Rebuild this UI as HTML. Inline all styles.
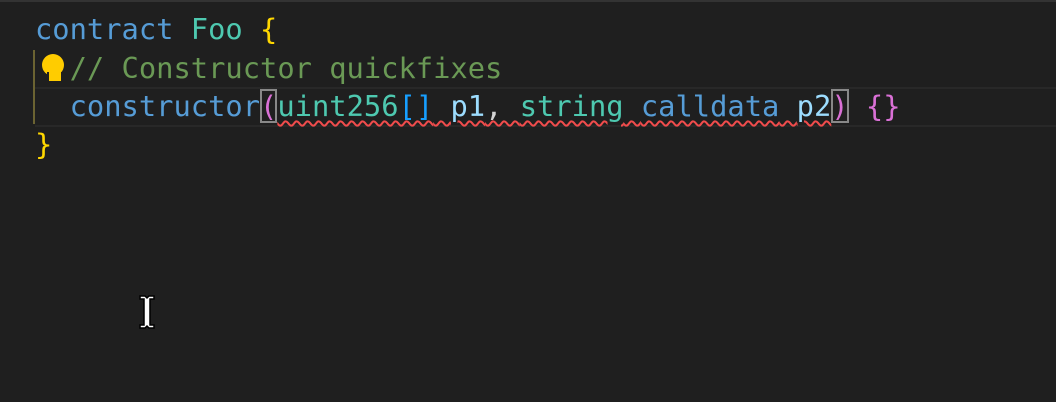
<!DOCTYPE html><html><head><style>
body{margin:0;width:1056px;height:402px;background:#1f1f1f;overflow:hidden;position:relative;font-family:"DejaVu Sans Mono","Liberation Mono",monospace;font-size:28.75px}
.l{position:absolute;left:35px;height:38px;line-height:38px;white-space:pre;color:#d4d4d4}
.k{color:#569cd6}.t{color:#4ec9b0}.y{color:#ffd700}.c{color:#6a9955}.v{color:#9cdcfe}.p{color:#da70d6}.b{color:#179fff}
.sq{text-decoration:underline wavy #f14c4c;text-decoration-thickness:1.5px;text-underline-offset:4px}
</style></head><body>
<div style="position:absolute;left:0;top:0;width:1056px;height:2px;background:#333"></div>
<div style="position:absolute;left:35px;top:87px;width:1021px;height:36px;border-top:2px solid #282828;border-bottom:2px solid #282828"></div>
<div style="position:absolute;left:33px;top:50px;width:2px;height:74px;background:#6b6332"></div>
<div class="l" style="top:10px"><span class="k">contract</span> <span class="t">Foo</span> <span class="y">{</span></div>
<div class="l" style="top:49px"><span class="c">  // Constructor quickfixes</span></div>
<div style="position:absolute;left:42px;top:54px;width:22px;height:22px;border-radius:50%;background:#ffcc00"></div>
<div style="position:absolute;left:47px;top:72px;width:12px;height:9px;background:#ffcc00;border:2px solid #1f1f1f;border-top:none"></div>
<div class="l" style="top:87px">  <span class="k">constructor</span><span class="p" style="outline:2px solid #888;outline-offset:-2px">(</span><span class="sq"><span class="t">uint256</span><span class="b">[]</span> <span class="v">p1</span>, </span><span class="sq"><span class="t">string</span> <span class="k">calldata</span> <span class="v">p2</span></span><span class="p" style="outline:2px solid #888;outline-offset:-2px">)</span> <span class="p">{}</span></div>
<div class="l" style="top:125px"><span class="y">}</span></div>
<svg style="position:absolute;left:138px;top:294px" width="18" height="36" viewBox="0 0 18 36"><path d="M2 2h5l2 2 2-2h5v3h-4v26h4v3h-5l-2-2-2 2H2v-3h4V5H2z" fill="#fff" stroke="#000" stroke-width="1.5"/></svg>
</body></html>
